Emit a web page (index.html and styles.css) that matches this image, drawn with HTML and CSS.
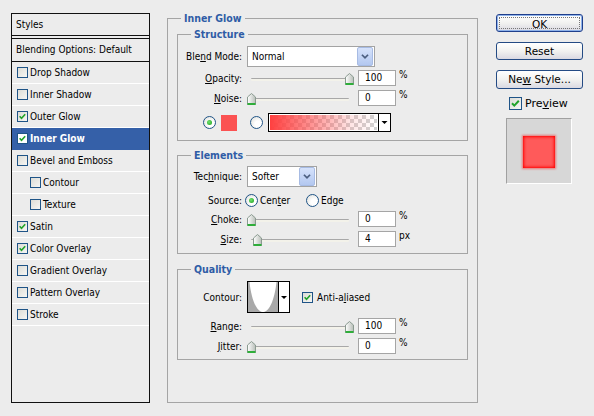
FILE: index.html
```
<!DOCTYPE html>
<html>
<head>
<meta charset="utf-8">
<link rel="stylesheet" href="styles.css">
</head>
<body>
<div class="dialog">
  <div class="styles-panel">
    <div class="sp-head">Styles</div>
    <div class="sp-blend">Blending Options: Default</div>
    <div class="sp-row"><span class="cb"></span>Drop Shadow</div>
    <div class="sp-row"><span class="cb"></span>Inner Shadow</div>
    <div class="sp-row"><span class="cb on"><svg viewBox="0 0 11 11"><path d="M2 5.2 L4.3 7.6 L8.8 2.8" /></svg></span>Outer Glow</div>
    <div class="sp-row sel"><span class="cb on"><svg viewBox="0 0 11 11"><path d="M2 5.2 L4.3 7.6 L8.8 2.8" /></svg></span>Inner Glow</div>
    <div class="sp-row"><span class="cb"></span>Bevel and Emboss</div>
    <div class="sp-row ind"><span class="cb"></span>Contour</div>
    <div class="sp-row ind"><span class="cb"></span>Texture</div>
    <div class="sp-row"><span class="cb on"><svg viewBox="0 0 11 11"><path d="M2 5.2 L4.3 7.6 L8.8 2.8" /></svg></span>Satin</div>
    <div class="sp-row"><span class="cb on"><svg viewBox="0 0 11 11"><path d="M2 5.2 L4.3 7.6 L8.8 2.8" /></svg></span>Color Overlay</div>
    <div class="sp-row"><span class="cb"></span>Gradient Overlay</div>
    <div class="sp-row"><span class="cb"></span>Pattern Overlay</div>
    <div class="sp-row"><span class="cb"></span>Stroke</div>
  </div>

  <div class="main">
    <div class="group outer">
      <span class="gtitle">Inner Glow</span>

      <div class="group g-structure">
        <span class="gtitle">Structure</span>
        <div class="row r-select">
          <span class="lbl">Ble<u>n</u>d Mode:</span>
          <div class="select w-blend"><span class="sel-text">Normal</span><span class="sel-btn"><svg viewBox="0 0 16 19"><path d="M4.5 7.5 L8 11 L11.5 7.5" /></svg></span></div>
        </div>
        <div class="row r-slider r-opacity">
          <span class="lbl"><u>O</u>pacity:</span>
          <div class="slider"><span class="track"></span><svg class="thumb" style="left:98px" viewBox="0 0 9 12"><defs><linearGradient id="tg1" x1="0" y1="0" x2="1" y2="0"><stop offset="0" stop-color="#fff"/><stop offset="1" stop-color="#b8beb8"/></linearGradient></defs><path d="M4.5 0.5 L8.5 4 L8.5 11.5 L0.5 11.5 L0.5 4 Z" fill="url(#tg1)" stroke="#8a9a90"/><rect x="0.5" y="10" width="8" height="2" fill="#2fae3a"/></svg></div>
          <span class="num">100</span><span class="unit">%</span>
        </div>
        <div class="row r-slider r-noise">
          <span class="lbl"><u>N</u>oise:</span>
          <div class="slider"><span class="track"></span><svg class="thumb" style="left:0px" viewBox="0 0 9 12"><defs><linearGradient id="tg2" x1="0" y1="0" x2="1" y2="0"><stop offset="0" stop-color="#fff"/><stop offset="1" stop-color="#b8beb8"/></linearGradient></defs><path d="M4.5 0.5 L8.5 4 L8.5 11.5 L0.5 11.5 L0.5 4 Z" fill="url(#tg2)" stroke="#8a9a90"/><rect x="0.5" y="10" width="8" height="2" fill="#2fae3a"/></svg></div>
          <span class="num">0</span><span class="unit">%</span>
        </div>
        <div class="row r-color">
          <span class="radio on"></span>
          <span class="swatch"></span>
          <span class="radio r2"></span>
          <div class="gradbox"><span class="grad"></span><span class="gb-btn"><svg viewBox="0 0 11 17"><path d="M2.5 7 L8.5 7 L5.5 10 Z" /></svg></span></div>
        </div>
      </div>

      <div class="group g-elements">
        <span class="gtitle">Elements</span>
        <div class="row r-select">
          <span class="lbl">Tec<u>h</u>nique:</span>
          <div class="select w-tech"><span class="sel-text">Softer</span><span class="sel-btn"><svg viewBox="0 0 16 19"><path d="M4.5 7.5 L8 11 L11.5 7.5" /></svg></span></div>
        </div>
        <div class="row r-source">
          <span class="lbl">Source:</span>
          <span class="radio on"></span><span class="rtext t-center">Cen<u>t</u>er</span>
          <span class="radio"></span><span class="rtext">Edge</span>
        </div>
        <div class="row r-slider r-choke">
          <span class="lbl"><u>C</u>hoke:</span>
          <div class="slider"><span class="track"></span><svg class="thumb" style="left:0px" viewBox="0 0 9 12"><defs><linearGradient id="tg3" x1="0" y1="0" x2="1" y2="0"><stop offset="0" stop-color="#fff"/><stop offset="1" stop-color="#b8beb8"/></linearGradient></defs><path d="M4.5 0.5 L8.5 4 L8.5 11.5 L0.5 11.5 L0.5 4 Z" fill="url(#tg3)" stroke="#8a9a90"/><rect x="0.5" y="10" width="8" height="2" fill="#2fae3a"/></svg></div>
          <span class="num">0</span><span class="unit">%</span>
        </div>
        <div class="row r-slider r-size">
          <span class="lbl"><u>S</u>ize:</span>
          <div class="slider"><span class="track"></span><svg class="thumb" style="left:6px" viewBox="0 0 9 12"><defs><linearGradient id="tg4" x1="0" y1="0" x2="1" y2="0"><stop offset="0" stop-color="#fff"/><stop offset="1" stop-color="#b8beb8"/></linearGradient></defs><path d="M4.5 0.5 L8.5 4 L8.5 11.5 L0.5 11.5 L0.5 4 Z" fill="url(#tg4)" stroke="#8a9a90"/><rect x="0.5" y="10" width="8" height="2" fill="#2fae3a"/></svg></div>
          <span class="num">4</span><span class="unit">px</span>
        </div>
      </div>

      <div class="group g-quality">
        <span class="gtitle">Quality</span>
        <div class="row r-contour">
          <span class="lbl">Contour:</span>
          <div class="contour">
            <svg class="curve" viewBox="0 0 30 30"><rect width="30" height="30" fill="#fff"/><path d="M0 0 L1.5 0 C3 14 7 28 14 30 L0 30 Z" fill="#a9a9a9"/><path d="M30 0 L28.5 0 C27 14 23 28 16 30 L30 30 Z" fill="#a9a9a9"/></svg>
            <span class="ct-btn"><svg viewBox="0 0 10 30"><path d="M2 14 L8 14 L5 17 Z" /></svg></span>
          </div>
          <span class="cb on aa"><svg viewBox="0 0 11 11"><path d="M2 5.2 L4.3 7.6 L8.8 2.8" /></svg></span><span class="aa-text">Anti-a<u>l</u>iased</span>
        </div>
        <div class="row r-slider r-range">
          <span class="lbl"><u>R</u>ange:</span>
          <div class="slider"><span class="track"></span><svg class="thumb" style="left:98px" viewBox="0 0 9 12"><defs><linearGradient id="tg5" x1="0" y1="0" x2="1" y2="0"><stop offset="0" stop-color="#fff"/><stop offset="1" stop-color="#b8beb8"/></linearGradient></defs><path d="M4.5 0.5 L8.5 4 L8.5 11.5 L0.5 11.5 L0.5 4 Z" fill="url(#tg5)" stroke="#8a9a90"/><rect x="0.5" y="10" width="8" height="2" fill="#2fae3a"/></svg></div>
          <span class="num">100</span><span class="unit">%</span>
        </div>
        <div class="row r-slider r-jitter">
          <span class="lbl"><u>J</u>itter:</span>
          <div class="slider"><span class="track"></span><svg class="thumb" style="left:0px" viewBox="0 0 9 12"><defs><linearGradient id="tg6" x1="0" y1="0" x2="1" y2="0"><stop offset="0" stop-color="#fff"/><stop offset="1" stop-color="#b8beb8"/></linearGradient></defs><path d="M4.5 0.5 L8.5 4 L8.5 11.5 L0.5 11.5 L0.5 4 Z" fill="url(#tg6)" stroke="#8a9a90"/><rect x="0.5" y="10" width="8" height="2" fill="#2fae3a"/></svg></div>
          <span class="num">0</span><span class="unit">%</span>
        </div>
      </div>
    </div>
  </div>

  <div class="side">
    <div class="btn b-ok"><span class="focus">OK</span></div>
    <div class="btn">Reset</div>
    <div class="btn b-new">Ne<u>w</u> Style...</div>
    <div class="preview-row"><span class="cb on pv"><svg viewBox="0 0 11 11"><path d="M2 5.2 L4.3 7.6 L8.8 2.8" /></svg></span><span>Pre<u>v</u>iew</span></div>
    <div class="preview"><span class="pv-square"></span></div>
  </div>
</div>
</body>
</html>
```
FILE: styles.css
```
* { box-sizing: border-box; }
html, body { margin: 0; padding: 0; }
body {
  background: #ececec;
  font-family: "DejaVu Sans Condensed", "DejaVu Sans", sans-serif;
  font-stretch: condensed;
  font-size: 10px;
  color: #000;
  width: 594px;
  height: 416px;
  overflow: hidden;
}
u { text-decoration: underline; text-underline-offset: 1px; }

.dialog { display: flex; align-items: flex-start; }

/* ---------- left styles list ---------- */
.styles-panel {
  margin: 13px 0 0 11px;
  width: 139px;
  height: 390px;
  border: 1px solid #111;
  background: #ececec;
}
.sp-head {
  height: 22px;
  padding-left: 4px;
  line-height: 21px;
  border-bottom: 1px solid #111;
  margin-bottom: 2px;
}
.sp-blend {
  height: 24px;
  padding-left: 4px;
  line-height: 22px;
  border-top: 1px solid #111;
  border-bottom: 1px solid #111;
}
.sp-row {
  height: 22px;
  border-bottom: 1px solid #fff;
  display: flex;
  align-items: center;
  padding-left: 5px;
}
.sp-row.ind { padding-left: 18px; }
.sp-row.sel {
  background: #3560a8;
  color: #fff;
  font-weight: bold;
  border-bottom-color: #3560a8;
}
.cb {
  width: 11px;
  height: 11px;
  border: 1px solid #1f5487;
  background: linear-gradient(135deg, #dcdcd6, #f6f6f4);
  margin-right: 2px;
  flex: none;
  display: inline-block;
  position: relative;
}
.cb svg { position: absolute; left: 0; top: 0; width: 9px; height: 9px; }
.cb svg path { fill: none; stroke: #21a32a; stroke-width: 2; }
.sp-row.sel .cb { background: #fff; }

/* ---------- main groups ---------- */
.main { margin: 18px 0 0 17px; }
.group {
  border: 1px solid #a5a5a5;
  position: relative;
}
.gtitle {
  position: absolute;
  top: -7px;
  left: 13px;
  padding: 0 3px;
  background: #ececec;
  color: #2f5ca6;
  font-weight: bold;
  font-size: 10.5px;
  line-height: 13px;
}
.outer {
  width: 311px;
  height: 385px;
  padding: 15px 9px 0 9px;
}
.g-structure { height: 107px; padding-top: 11px; }
.g-elements { height: 99px; margin-top: 14px; padding-top: 10px; }
.g-quality { height: 91px; margin-top: 15px; padding-top: 11px; }

.row { display: flex; align-items: center; }
.lbl {
  width: 64px;
  text-align: right;
  margin-right: 5px;
  flex: none;
}
.r-select { height: 21px; }
.r-slider { height: 16px; }
.r-opacity { margin-top: 3px; }
.r-noise { margin-top: 4px; }
.r-choke { margin-top: 4px; }
.r-size { margin-top: 4px; }
.r-range { margin-top: 5px; }
.r-jitter { margin-top: 4px; }

.select {
  height: 21px;
  border: 1px solid #a3a3a3;
  background: #fff;
  display: flex;
  align-items: center;
  justify-content: space-between;
  padding: 1px;
}
.w-blend { width: 128px; }
.w-tech { width: 70px; }
.sel-text { padding-left: 3px; }
.sel-btn {
  width: 16px;
  height: 19px;
  background: linear-gradient(#d6e2fb, #b3c8f0);
  border: 1px solid #a7bbe3;
  border-radius: 2px;
}
.sel-btn svg { width: 14px; height: 17px; display: block; }
.sel-btn svg path { fill: none; stroke: #4c5f80; stroke-width: 2; }

.slider {
  width: 108px;
  height: 16px;
  position: relative;
  margin-right: 3px;
}
.track {
  position: absolute;
  left: 4px;
  top: 8px;
  width: 98px;
  height: 3px;
  background: #f3f2ea;
  border-top: 1px solid #a8a8a8;
  border-radius: 1px;
}
.thumb {
  position: absolute;
  top: 3px;
  width: 9px;
  height: 12px;
}
.num {
  width: 38px;
  height: 16px;
  border: 1px solid #a5a5a5;
  background: #fff;
  padding-left: 6px;
  line-height: 14px;
}
.unit {
  margin-left: 3px;
  align-self: flex-start;
  line-height: 10px;
}

.r-color { height: 19px; margin-top: 7px; padding-left: 25px; }
.radio {
  width: 13px;
  height: 13px;
  border: 1px solid #1f5487;
  border-radius: 50%;
  background: radial-gradient(circle at 65% 65%, #fff 30%, #dcdcd6 100%);
  flex: none;
  position: relative;
}
.radio.on::after {
  content: "";
  position: absolute;
  left: 3px;
  top: 3px;
  width: 5px;
  height: 5px;
  border-radius: 50%;
  background: radial-gradient(circle at 40% 40%, #6ee46e, #1a9a1a);
}
.swatch {
  width: 16px;
  height: 16px;
  background: #fb5252;
  margin-left: 5px;
}
.r-color .r2 { margin-left: 13px; }
.gradbox {
  width: 123px;
  height: 19px;
  margin-left: 5px;
  border: 1px solid #000;
  display: flex;
  background: #fff;
}
.grad {
  flex: 1;
  border: 1px solid #fff;
  background:
    linear-gradient(to right, rgba(255,64,64,1), rgba(255,80,80,0.6) 40%, rgba(255,120,120,0.2) 75%, rgba(255,255,255,0)),
    repeating-conic-gradient(#d2d2d2 0 25%, #ffffff 0 50%) 0 0 / 8px 8px;
}
.gb-btn {
  width: 12px;
  border-left: 1px solid #000;
  background: #fff;
}
.gb-btn svg { display: block; width: 11px; height: 17px; }
.gb-btn svg path { fill: #000; }

.r-source { height: 14px; margin-top: 6px; }
.r-source .lbl { margin-right: 3px; }
.rtext { margin-left: 2px; }
.t-center { width: 46px; }

.r-contour { height: 32px; }
.contour {
  width: 43px;
  height: 32px;
  border: 1px solid #000;
  display: flex;
  background: #fff;
}
.curve { width: 30px; height: 30px; display: block; }
.ct-btn { width: 11px; border-left: 1px solid #000; }
.ct-btn svg { display: block; width: 10px; height: 30px; }
.ct-btn svg path { fill: #000; }
.cb.aa { margin-left: 12px; margin-right: 4px; }

/* ---------- right column ---------- */
.side {
  margin: 14px 0 0 18px;
  width: 87px;
  display: flex;
  flex-direction: column;
}
.btn {
  width: 87px;
  height: 18px;
  border: 1px solid #244b84;
  border-radius: 3px;
  background: linear-gradient(#ffffff, #f2f2f0 50%, #dad9e2);
  font-family: "DejaVu Sans", sans-serif;
  font-stretch: normal;
  font-size: 10.5px;
  line-height: 16px;
  text-align: center;
  margin-bottom: 10px;
}
.b-new { height: 19px; margin-bottom: 8px; }
.b-ok { border-color: #1f3f8c; box-shadow: inset 0 0 0 1px #8eb2ea; padding: 2px; }
.b-ok .focus {
  display: block;
  height: 12px;
  line-height: 12px;
  border: 1px dotted #777;
}
.preview-row {
  display: flex;
  align-items: center;
  height: 13px;
  padding-left: 13px;
  font-size: 11px;
  font-family: "DejaVu Sans", sans-serif;
  font-stretch: normal;
}
.cb.pv { width: 13px; height: 13px; margin-right: 3px; }
.cb.pv svg { width: 11px; height: 11px; }
.preview {
  margin: 8px 0 0 10px;
  width: 66px;
  height: 66px;
  background: #d7d7d7;
  border-top: 1px solid #a0a0a0;
  border-left: 1px solid #a0a0a0;
  border-right: 1px solid #fff;
  border-bottom: 1px solid #fff;
  padding: 17px 0 0 16px;
}
.pv-square {
  display: block;
  width: 32px;
  height: 32px;
  background: #ff5a5a;
  box-shadow: inset 0 0 3px 1px #f00, 0 0 2px 1px rgba(255,0,0,0.45);
}
```
